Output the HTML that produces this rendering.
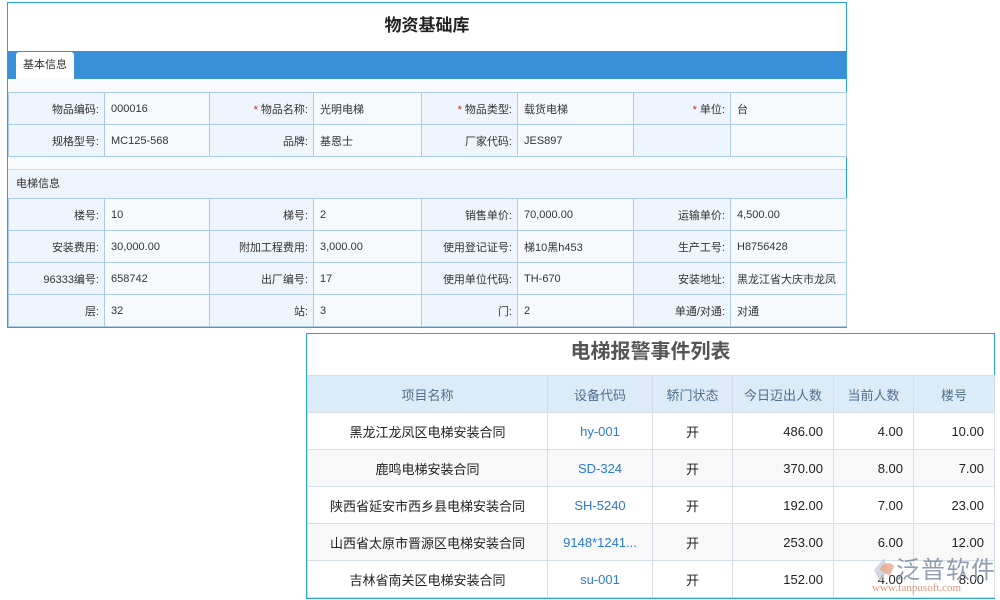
<!DOCTYPE html>
<html><head><meta charset="utf-8"><style>
*{margin:0;padding:0;box-sizing:border-box}
body{width:1000px;height:600px;background:#fff;position:relative;overflow:hidden;font-family:"Liberation Sans","Noto Sans CJK SC",sans-serif;color:#333}
.a{position:absolute}
table{border-collapse:collapse;table-layout:fixed;position:absolute}
.f td{border:1px solid #a9cce9;font-size:11px;height:32px;padding:0 6px;white-space:nowrap;overflow:hidden}
.f td.l{background:#eef5fc;text-align:right;padding-right:5px}
.f td.v{background:#f7fafd}
.r{color:#e02020}
.t td{border:1px solid #d6dfe8;font-size:13px;height:37px;text-align:center;white-space:nowrap;color:#222}
.t tr.h td{background:#dcebf8;color:#4f6f8e}
.t tr:nth-child(odd) td{background:#f8f8f8}
.t tr.h td{background:#dcebf8}
.t td.n{text-align:right;padding-right:10px}
.t td.c{color:#2a7bd3}
</style></head><body>
<div class="a" style="left:7px;top:2px;width:840px;height:326px;border:1px solid #29a3e0;background:#f8fafc"></div>
<div class="a" style="left:8px;top:3px;width:838px;height:48px;background:#fff;text-align:center;font-size:17px;font-weight:bold;line-height:46px;color:#222">物资基础库</div>
<div class="a" style="left:8px;top:51px;width:838px;height:28px;background:#3a8fd9"></div>
<div class="a" style="left:16px;top:52px;width:58px;height:27px;background:#fff;border-radius:3px 3px 0 0;font-size:11px;line-height:26px;text-align:center;color:#333">基本信息</div>
<table class="f" style="left:8px;top:92px;width:838px">
<colgroup><col style="width:96px"><col style="width:105px"><col style="width:104px"><col style="width:108px"><col style="width:96px"><col style="width:116px"><col style="width:97px"><col style="width:116px"></colgroup>
<tr><td class="l">物品编码:</td><td class="v">000016</td><td class="l"><span class="r">*</span> 物品名称:</td><td class="v">光明电梯</td><td class="l"><span class="r">*</span> 物品类型:</td><td class="v">载货电梯</td><td class="l"><span class="r">*</span> 单位:</td><td class="v">台</td></tr>
<tr><td class="l">规格型号:</td><td class="v">MC125-568</td><td class="l">品牌:</td><td class="v">基恩士</td><td class="l">厂家代码:</td><td class="v">JES897</td><td class="l"></td><td class="v"></td></tr>
</table>
<div class="a" style="left:8px;top:169px;width:838px;height:29px;background:#eef4fc;border-top:1px solid #c9dcef;font-size:11px;line-height:28px;padding-left:8px">电梯信息</div>
<table class="f" style="left:8px;top:198px;width:838px">
<colgroup><col style="width:96px"><col style="width:105px"><col style="width:104px"><col style="width:108px"><col style="width:96px"><col style="width:116px"><col style="width:97px"><col style="width:116px"></colgroup>
<tr><td class="l">楼号:</td><td class="v">10</td><td class="l">梯号:</td><td class="v">2</td><td class="l">销售单价:</td><td class="v">70,000.00</td><td class="l">运输单价:</td><td class="v">4,500.00</td></tr>
<tr><td class="l">安装费用:</td><td class="v">30,000.00</td><td class="l">附加工程费用:</td><td class="v">3,000.00</td><td class="l">使用登记证号:</td><td class="v">梯10黑h453</td><td class="l">生产工号:</td><td class="v">H8756428</td></tr>
<tr><td class="l">96333编号:</td><td class="v">658742</td><td class="l">出厂编号:</td><td class="v">17</td><td class="l">使用单位代码:</td><td class="v">TH-670</td><td class="l">安装地址:</td><td class="v">黑龙江省大庆市龙凤</td></tr>
<tr><td class="l">层:</td><td class="v">32</td><td class="l">站:</td><td class="v">3</td><td class="l">门:</td><td class="v">2</td><td class="l">单通/对通:</td><td class="v">对通</td></tr>
</table>

<div class="a" style="left:306px;top:333px;width:689px;height:266px;border:1px solid #29a3e0;background:#fff"></div>
<div class="a" style="left:307px;top:334px;width:687px;height:41px;text-align:center;font-size:20px;font-weight:bold;line-height:36px;color:#555">电梯报警事件列表</div>
<table class="t" style="left:307px;top:375px;width:687px">
<colgroup><col style="width:240px"><col style="width:105px"><col style="width:80px"><col style="width:101px"><col style="width:80px"><col style="width:81px"></colgroup>
<tr class="h"><td>项目名称</td><td>设备代码</td><td>轿门状态</td><td>今日迈出人数</td><td>当前人数</td><td>楼号</td></tr>
<tr><td>黑龙江龙凤区电梯安装合同</td><td class="c">hy-001</td><td>开</td><td class="n">486.00</td><td class="n">4.00</td><td class="n">10.00</td></tr>
<tr><td>鹿鸣电梯安装合同</td><td class="c">SD-324</td><td>开</td><td class="n">370.00</td><td class="n">8.00</td><td class="n">7.00</td></tr>
<tr><td>陕西省延安市西乡县电梯安装合同</td><td class="c">SH-5240</td><td>开</td><td class="n">192.00</td><td class="n">7.00</td><td class="n">23.00</td></tr>
<tr><td>山西省太原市晋源区电梯安装合同</td><td class="c">9148*1241...</td><td>开</td><td class="n">253.00</td><td class="n">6.00</td><td class="n">12.00</td></tr>
<tr><td>吉林省南关区电梯安装合同</td><td class="c">su-001</td><td>开</td><td class="n">152.00</td><td class="n">4.00</td><td class="n">8.00</td></tr>
</table>
<svg class="a" style="left:870px;top:556px" width="28" height="28" viewBox="0 0 28 28"><path d="M14 2 L4 14 L10 26 L18 14 Z" fill="#c8d0da" opacity=".8"/><path d="M10 14 A8 8 0 0 1 24 10 L20 20 Z" fill="#e8a78a" opacity=".8"/></svg>
<div class="a" style="left:896px;top:550px;font-size:24px;color:#7d8ea3;opacity:.85;letter-spacing:1px">泛普软件</div>
<div class="a" style="left:872px;top:582px;font-size:11px;color:#d98b6e;font-family:'Liberation Serif',serif;opacity:.9">www.fanpusoft.com</div>
</body></html>
